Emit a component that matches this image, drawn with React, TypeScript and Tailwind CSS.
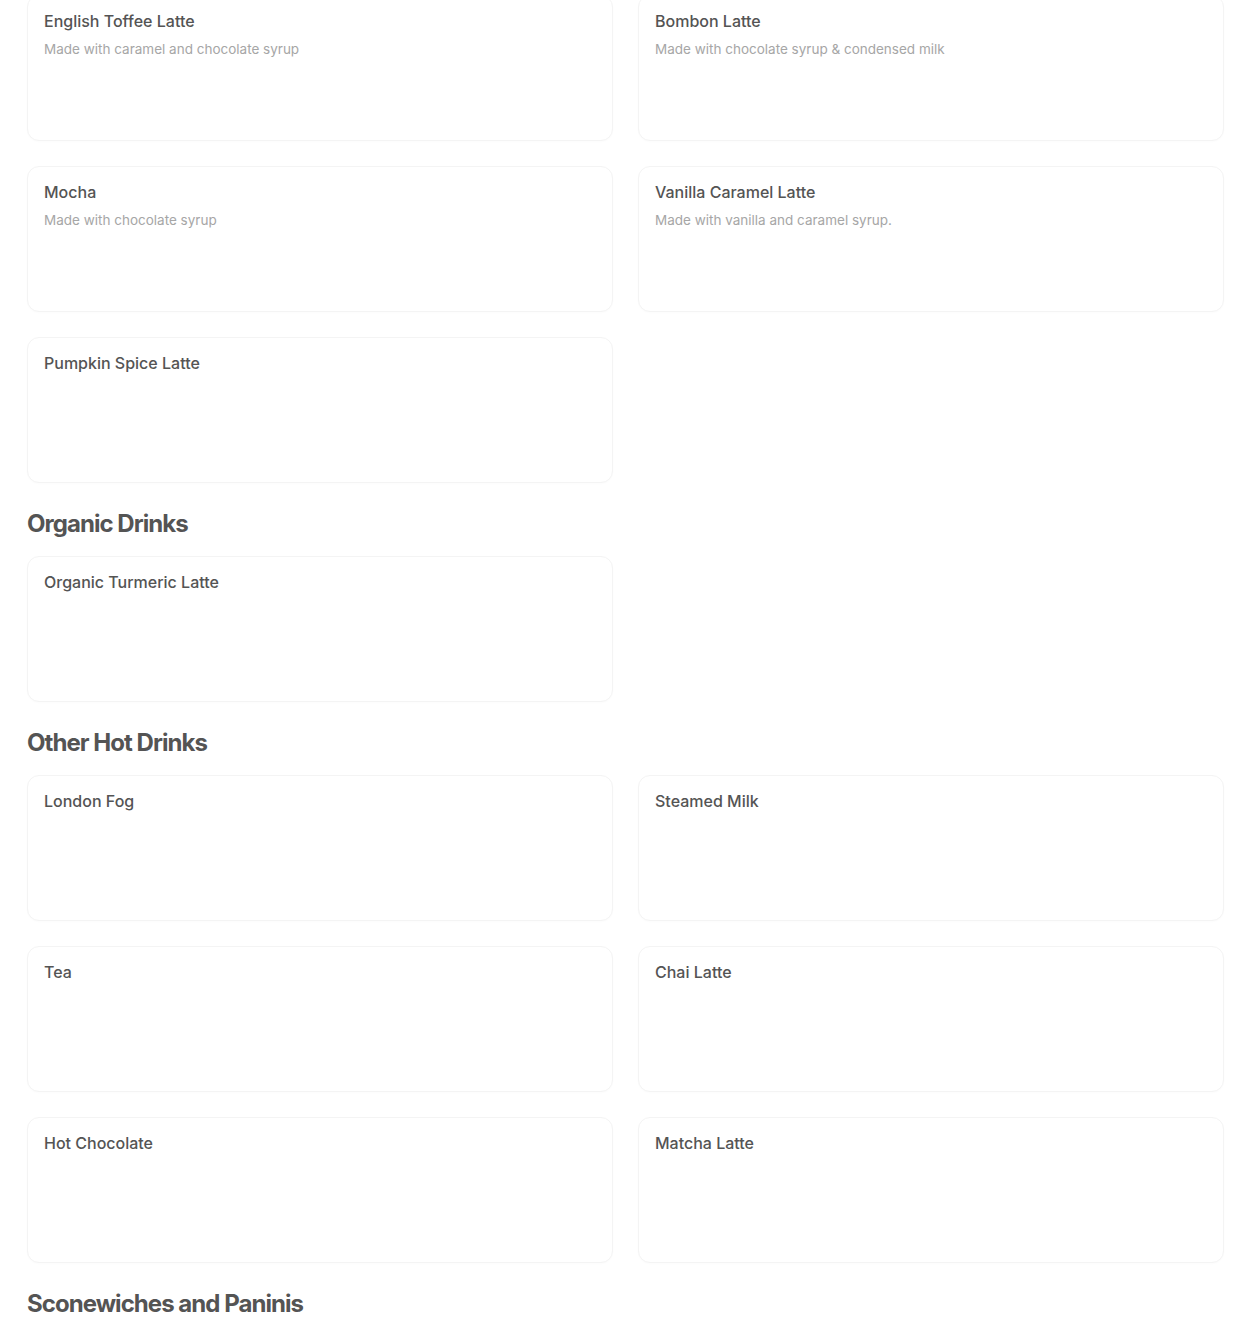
import React from "react";

type Item = { name: string; desc?: string };

const lattes: Item[] = [
  { name: "English Toffee Latte", desc: "Made with caramel and chocolate syrup" },
  { name: "Bombon Latte", desc: "Made with chocolate syrup & condensed milk" },
  { name: "Mocha", desc: "Made with chocolate syrup" },
  { name: "Vanilla Caramel Latte", desc: "Made with vanilla and caramel syrup." },
  { name: "Pumpkin Spice Latte" },
];

const organic: Item[] = [{ name: "Organic Turmeric Latte" }];

const otherHot: Item[] = [
  { name: "London Fog" },
  { name: "Steamed Milk" },
  { name: "Tea" },
  { name: "Chai Latte" },
  { name: "Hot Chocolate" },
  { name: "Matcha Latte" },
];

const MenuCard = ({ item }: { item: Item }) => (
  <div className="h-[146px] rounded-xl border border-[#f4f4f4] bg-white px-[16px] pt-[15px] shadow-[0_1px_2px_rgba(0,0,0,0.015)]">
    <h3 className="text-[16px] font-medium leading-[20px] text-[#545454]">{item.name}</h3>
    {item.desc && (
      <p className="mt-[9px] text-[13.5px] leading-[18px] text-[#a6a6a6]">{item.desc}</p>
    )}
  </div>
);

const Grid = ({ items }: { items: Item[] }) => (
  <div className="grid grid-cols-2 gap-[25px]">
    {items.map((item) => (
      <MenuCard key={item.name} item={item} />
    ))}
  </div>
);

const Heading = ({ children }: { children: React.ReactNode }) => (
  <h2 className="text-[24px] font-bold leading-[32px] tracking-[-0.04em] text-[#545454]">{children}</h2>
);

const Section = ({ title, items }: { title: string; items: Item[] }) => (
  <section className="mt-[25px]">
    <Heading>{title}</Heading>
    <div className="mt-[16px]">
      <Grid items={items} />
    </div>
  </section>
);

export default function App() {
  return (
    <div className="min-h-[1333px] w-full overflow-hidden bg-white font-['Inter','Liberation_Sans',sans-serif]">
      <div className="-mt-[5px] pb-10 pl-[27px] pr-[26px]">
        <Grid items={lattes} />
        <Section title="Organic Drinks" items={organic} />
        <Section title="Other Hot Drinks" items={otherHot} />
        <section className="mt-[25px]">
          <Heading>Sconewiches and Paninis</Heading>
        </section>
      </div>
    </div>
  );
}
